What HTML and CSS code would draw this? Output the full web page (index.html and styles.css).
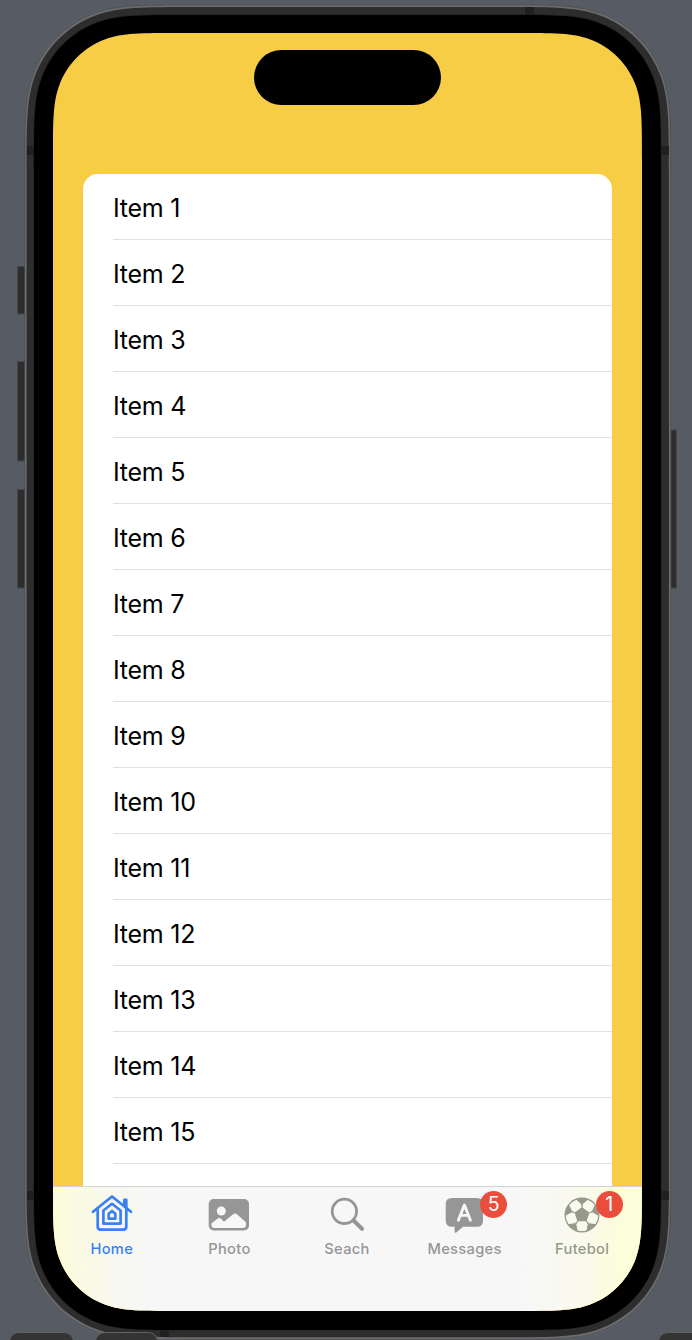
FILE: index.html
```html
<!DOCTYPE html>
<html lang="en">
<head>
<meta charset="utf-8">
<title>Items</title>
<link rel="stylesheet" href="styles.css">
</head>
<body>
<div class="stage">
  <svg class="chrome" width="692" height="1340" viewBox="0 0 692 1340" aria-hidden="true">
    <g class="buttons">
      <rect x="17.500" y="266.500" width="12" height="47.500"/>
      <rect x="17.500" y="361.500" width="12" height="99.500"/>
      <rect x="17.500" y="489.500" width="12" height="98.500"/>
      <rect x="666" y="430" width="10.500" height="158"/>
    </g>
    <path class="rim-shadow" data-box="24.300 4.500 647 1335 112"/>
    <path class="rim" data-box="25 5.200 645.500 1333.800 111"/>
    <path class="band" data-box="26.600 6.900 642.300 1330.300 110"/>
    <g class="antenna">
      <rect x="27" y="146" width="7" height="9"/>
      <rect x="661" y="146" width="8" height="9"/>
      <rect x="27" y="1191" width="7" height="9"/>
      <rect x="661" y="1191" width="8" height="9"/>
      <rect x="525" y="7" width="9" height="8"/>
      <rect x="160" y="1329" width="9" height="8"/>
    </g>
    <path class="glass-edge" data-box="33.300 14.300 628.200 1316.200 101"/>
    <path class="glass" data-box="34 15 627 1315 100.500"/>
    <g class="dock">
      <rect x="9.500" y="1332.500" width="64" height="30" rx="9"/>
      <rect x="95.500" y="1332.500" width="62" height="30" rx="9"/>
      <rect x="658.500" y="1332.500" width="64" height="30" rx="9"/>
    </g>
  </svg>

  <main class="screen">
    <div class="status"><div class="island"></div></div>
    <ul class="list">
      <li>Item 1</li><li>Item 2</li><li>Item 3</li><li>Item 4</li><li>Item 5</li>
      <li>Item 6</li><li>Item 7</li><li>Item 8</li><li>Item 9</li><li>Item 10</li>
      <li>Item 11</li><li>Item 12</li><li>Item 13</li><li>Item 14</li><li>Item 15</li>
    </ul>
    <nav class="tabs">
      <div class="tab active">
        <svg class="icon" width="60" height="48" viewBox="-30 0 60 48">
          <g fill="none" stroke="currentColor" stroke-width="2.700" stroke-linecap="round" stroke-linejoin="round">
            <path d="M-19 22.800 L0 7.500 L19 22.800"/>
            <path d="M-14.300 20 V37.800 Q-14.300 40.600 -11.500 40.600 H11.500 Q14.300 40.600 14.300 37.800 V20"/>
            <path d="M-8.600 21.500 L0 14.800 L8.600 21.500 V34.600 H-8.600 Z"/>
            <path d="M-3.300 24.800 L0 22 L3.300 24.800 V29.700 H-3.300 Z"/>
          </g>
          <path fill="currentColor" d="M11 10.800 Q11 9.600 12.200 9.600 H14.400 Q15.600 9.600 15.600 10.800 V20 L11 16.200 Z"/>
        </svg>
        <span>Home</span>
      </div>
      <div class="tab">
        <svg class="icon" width="60" height="48" viewBox="-30 0 60 48">
          <rect x="-20.300" y="10" width="40.300" height="31.500" rx="5" fill="currentColor"/>
          <circle cx="-7.700" cy="22" r="4.500" fill="#f7f7f7"/>
          <path fill="#f7f7f7" d="M-17.600 34.500 L-11.300 29.500 Q-9.700 28.300 -8.200 29.500 L-5 32.800 L3.800 25.400 Q6 23.800 8.200 25.400 L17 33.300 V36 Q17 38.900 14 38.900 H-14.500 Q-17.600 38.900 -17.600 36 Z"/>
        </svg>
        <span>Photo</span>
      </div>
      <div class="tab">
        <svg class="icon" width="60" height="48" viewBox="-30 0 60 48">
          <g fill="none" stroke="currentColor" stroke-linecap="round">
            <circle cx="-2.600" cy="22.300" r="12.200" stroke-width="2.800"/>
            <path d="M6.500 31.500 L15 39.800" stroke-width="4"/>
          </g>
        </svg>
        <span>Seach</span>
      </div>
      <div class="tab">
        <svg class="icon" width="60" height="48" viewBox="-30 0 60 48">
          <path fill="currentColor" d="M-13 9 H12 Q18 9 18 15 V31.800 Q18 37.800 12 37.800 H-2 L-8.400 43.300 Q-10.400 44.800 -10.400 42.300 V37.800 H-13 Q-19.300 37.800 -19.300 31.800 V15 Q-19.300 9 -13 9 Z"/>
          <path fill="none" stroke="#f7f7f7" stroke-width="2.900" stroke-linecap="round" stroke-linejoin="round" d="M-6.600 31.200 L-.600 16 L5.400 31.200 M-4.400 26.400 H3.200"/>
        </svg>
        <b class="badge">5</b>
        <span>Messages</span>
      </div>
      <div class="tab warm">
        <svg class="icon" width="60" height="48" viewBox="-30 0 60 48">
          <circle cx="0" cy="26" r="17.500" fill="currentColor"/>
          <g fill="#f9faee" stroke="#f9faee" stroke-width="1" stroke-linejoin="round">
            <path id="patch" d="M-4 41.200 L-5.200 35.300 L-3.700 32.800 H3.700 L5.200 35.300 L4 41.200 Q0 42.200 -4 41.200 Z"/>
            <use href="#patch" transform="rotate(72 0 26)"/>
            <use href="#patch" transform="rotate(144 0 26)"/>
            <use href="#patch" transform="rotate(216 0 26)"/>
            <use href="#patch" transform="rotate(288 0 26)"/>
          </g>
        </svg>
        <b class="badge near">1</b>
        <span>Futebol</span>
      </div>
    </nav>
  </main>
</div>
<script src="shape.js"></script>
</body>
</html>
```
FILE: styles.css
```css
* { box-sizing: border-box; }
body { margin: 0; background: #575c64; font-family: Inter, "Liberation Sans", sans-serif; }
.stage { position: relative; width: 692px; height: 1340px; padding: 33px 50px 29px 53px; overflow: hidden; }
.chrome { position: absolute; inset: 0; }
.buttons { fill: #2d2d2d; stroke: #45484b; stroke-width: 1; }
.rim-shadow { fill: #4b4f54; }
.rim { fill: #6b6b6b; }
.band { fill: #2d2d2d; }
.antenna { fill: #202020; }
.glass-edge { fill: #222; }
.glass { fill: #000; }
.dock { fill: #343434; stroke: #626262; stroke-width: 1; }

.screen { position: relative; display: flex; flex-direction: column; width: 589px; height: 1278px; background: #f8cd46; }
.status { display: flex; justify-content: center; height: 141px; padding-top: 17px; flex: none; }
.island { width: 187px; height: 55px; margin-right: 1px; border-radius: 28px; background: #000; }
.list { flex: 1; margin: 0 30px; padding: 0 0 0 30px; list-style: none; background: #fff; border-radius: 15px 15px 0 0; }
.list li { height: 66px; padding-top: 2px; line-height: 65px; border-bottom: 1px solid #e0e0e1; font-size: 25px; letter-spacing: -0.25px; color: #000; }

.tabs { display: grid; grid-template-columns: repeat(5, 1fr); flex: none; height: 125px; padding-right: 1px; border-top: 1px solid #d2d2d0;
  background: linear-gradient(90deg, #fcfcda 0, #fafae3 25px, #f8f8ee 55px, #f7f7f6 95px, #f7f7f8 130px, #f7f7f8 450px, #f8f8f4 495px, #fafaea 535px, #fcfddc 565px, #fdfed8 589px); }
.tab { position: relative; display: flex; flex-direction: column; align-items: center; padding-top: 2px; color: #969696; }
.tab.active { color: #3880f6; }
.tab.warm { color: #97998b; }
.icon { display: block; }
.tab span { margin-top: 2px; font-size: 14.7px; line-height: 20px; font-weight: 500; letter-spacing: 0.3px; }
.badge { position: absolute; left: 74.5px; top: 4px; width: 27px; height: 27px; border-radius: 50%; background: #eb4d3d; color: #fff; font-size: 19.5px; line-height: 27px; font-weight: 400; text-align: center; }
.badge.near { left: 72.3px; }
```
FILE: shape.js
```
// Rounded rectangle whose corners ease into the straight edges.
function smoothRect(x, y, w, h, r) {
  const a = 1.528665 * r, b = 1.06 * r, c = 0.8367 * r, d = 0.631494 * r,
        e = 0.372824 * r, f = 0.16906 * r, g = 0.074911 * r;
  const R = x + w, B = y + h;
  return `M${x + a} ${y} H${R - a}
    C${R - b} ${y} ${R - c} ${y} ${R - d} ${y + g}
    C${R - e} ${y + f} ${R - f} ${y + e} ${R - g} ${y + d}
    C${R} ${y + c} ${R} ${y + b} ${R} ${y + a} V${B - a}
    C${R} ${B - b} ${R} ${B - c} ${R - g} ${B - d}
    C${R - f} ${B - e} ${R - e} ${B - f} ${R - d} ${B - g}
    C${R - c} ${B} ${R - b} ${B} ${R - a} ${B} H${x + a}
    C${x + b} ${B} ${x + c} ${B} ${x + d} ${B - g}
    C${x + e} ${B - f} ${x + f} ${B - e} ${x + g} ${B - d}
    C${x} ${B - c} ${x} ${B - b} ${x} ${B - a} V${y + a}
    C${x} ${y + b} ${x} ${y + c} ${x + g} ${y + d}
    C${x + f} ${y + e} ${x + e} ${y + f} ${x + d} ${y + g}
    C${x + c} ${y} ${x + b} ${y} ${x + a} ${y} Z`.replace(/\s+/g, ' ');
}
document.querySelectorAll('path[data-box]').forEach(p =>
  p.setAttribute('d', smoothRect(...p.dataset.box.split(' ').map(Number))));
document.querySelector('.screen').style.clipPath = `path("${smoothRect(0, 0, 589, 1278, 83)}")`;
```
